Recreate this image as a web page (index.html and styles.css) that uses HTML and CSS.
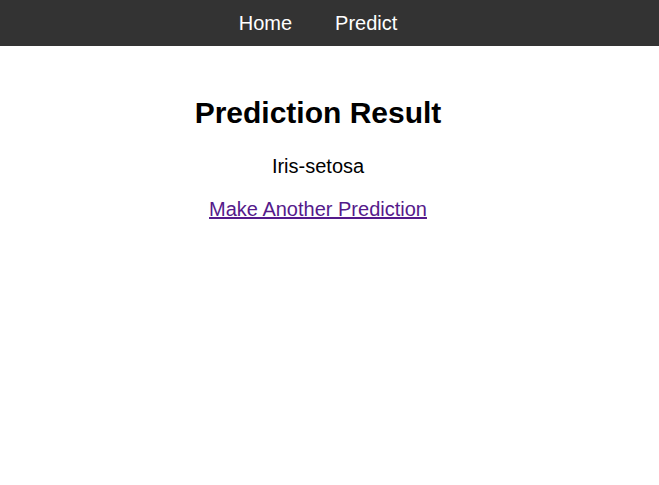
FILE: index.html
```
<!DOCTYPE html>
<html>
<head>
<meta charset="utf-8">
<link rel="stylesheet" href="styles.css">
</head>
<body>
<nav class="nav">
  <a class="nav-link" href="#">Home</a>
  <a class="nav-link" href="#">Predict</a>
</nav>
<main class="main">
  <h1 class="title">Prediction Result</h1>
  <p class="result">Iris-setosa</p>
  <a class="again" href="#">Make Another Prediction</a>
</main>
</body>
</html>
```
FILE: styles.css
```
html, body {
  margin: 0;
  padding: 0;
  background: #fff;
}
body {
  font-family: "Liberation Sans", Arial, sans-serif;
  font-size: 20px;
  color: #000;
}
.nav {
  background: #333;
  display: flex;
  justify-content: center;
  gap: 43px;
  padding: 12px 23px 12px 0;
  line-height: 22px;
}
.nav-link {
  color: #fff;
  text-decoration: none;
}
.main {
  display: flex;
  flex-direction: column;
  align-items: center;
  padding-right: 23px;
}
.title {
  font-size: 30px;
  margin: 50px 0 0;
  line-height: 34px;
}
.result {
  margin: 25px 0 0;
  line-height: 23px;
}
.again {
  margin-top: 20px;
  color: #551a8b;
  line-height: 23px;
}
```
